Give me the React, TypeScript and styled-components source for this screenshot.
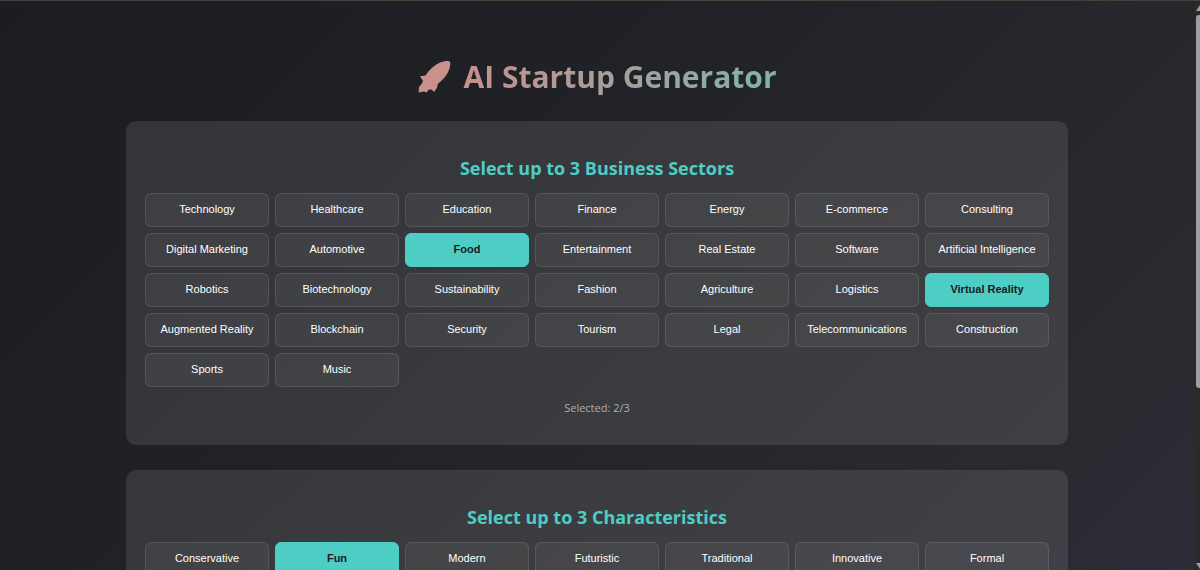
import React, { useState } from "react";
import styled, { createGlobalStyle } from "styled-components";

const GlobalStyle = createGlobalStyle`
  * { box-sizing: border-box; }
  body {
    margin: 0;
    background: #1f2024;
    color: #fff;
    font-family: "Open Sans", "Noto Sans", sans-serif;
  }
`;

const Shell = styled.div`
  display: flex;
  height: 100vh;
  overflow: hidden;
  border-top: 1px solid #47423c;
  background: linear-gradient(135deg, #1c1d20 0%, #202126 35%, #292a2e 80%, #2c2d37 100%);
`;

const Page = styled.main`
  flex: 1;
  min-width: 0;
  overflow-y: auto;
  scrollbar-width: none;
  padding: 48px 127px 24px 126px;
`;

const Title = styled.h1`
  display: flex;
  align-items: center;
  justify-content: center;
  gap: 12px;
  width: fit-content;
  margin: 0 auto 16px;
  font-size: 30px;
  line-height: 56px;
  font-weight: 700;
`;

const TitleText = styled.span`
  background: linear-gradient(90deg, #c88f8b 0%, #a5a09b 50%, #80b3ab 100%);
  background-clip: text;
  -webkit-background-clip: text;
  color: transparent;
`;

const Rocket = styled.svg`
  width: 34px;
  height: 34px;
  fill: #c9908c;
`;

const Panel = styled.section`
  margin-bottom: 25px;
  padding: 31px 19px 28px;
  border-radius: 10px;
  background: rgba(255, 255, 255, 0.1);
`;

const PanelTitle = styled.h2`
  margin: 0 0 9px;
  color: #4ecdc4;
  font-size: 18px;
  line-height: 32px;
  font-weight: 700;
  text-align: center;
`;

const OptionGrid = styled.div`
  display: grid;
  grid-template-columns: repeat(auto-fill, minmax(120px, 1fr));
  gap: 6px;
`;

const OptionButton = styled.button<{ $active: boolean }>`
  height: 34px;
  padding: 0 4px 2px;
  border: 1px solid ${(p) => (p.$active ? "#4ecdc4" : "rgba(255, 255, 255, 0.1)")};
  border-radius: 6px;
  background: ${(p) => (p.$active ? "#4ecdc4" : "rgba(255, 255, 255, 0.05)")};
  color: ${(p) => (p.$active ? "#1a1b1e" : "#fff")};
  font-family: "Liberation Sans", Arial, sans-serif;
  font-size: 11px;
  font-weight: ${(p) => (p.$active ? 700 : 400)};
  white-space: nowrap;
  cursor: pointer;
`;

const Count = styled.p`
  margin: 12px 0 0;
  color: #adadb0;
  font-size: 11px;
  line-height: 18px;
  text-align: center;
`;

const ScrollTrack = styled.div`
  display: flex;
  flex-direction: column;
  align-items: flex-end;
  width: 5px;
  padding: 4px 0 1px;
  background: #2b2b2c;
`;

const ScrollArrow = styled.svg`
  flex: none;
  width: 4px;
  height: 6px;
  fill: #9f9f9f;
`;

const ScrollSpace = styled.div`
  flex: 1;
  width: 4px;
  padding-top: 4px;
`;

const ScrollThumb = styled.div`
  height: 68%;
  border-radius: 3px 0 0 3px;
  background: #9f9f9f;
`;

const sectors = [
  "Technology", "Healthcare", "Education", "Finance", "Energy", "E-commerce", "Consulting",
  "Digital Marketing", "Automotive", "Food", "Entertainment", "Real Estate", "Software",
  "Artificial Intelligence", "Robotics", "Biotechnology", "Sustainability", "Fashion",
  "Agriculture", "Logistics", "Virtual Reality", "Augmented Reality", "Blockchain", "Security",
  "Tourism", "Legal", "Telecommunications", "Construction", "Sports", "Music",
];

const characteristics = [
  "Conservative", "Fun", "Modern", "Futuristic", "Traditional", "Innovative", "Formal",
];

const LIMIT = 3;

interface PickerProps {
  title: string;
  options: string[];
  initial: string[];
}

function Picker({ title, options, initial }: PickerProps) {
  const [selected, setSelected] = useState<string[]>(initial);

  const toggle = (option: string) =>
    setSelected((current) => {
      if (current.includes(option)) return current.filter((item) => item !== option);
      return current.length < LIMIT ? [...current, option] : current;
    });

  return (
    <Panel>
      <PanelTitle>{title}</PanelTitle>
      <OptionGrid>
        {options.map((option) => (
          <OptionButton
            key={option}
            type="button"
            $active={selected.includes(option)}
            aria-pressed={selected.includes(option)}
            onClick={() => toggle(option)}
          >
            {option}
          </OptionButton>
        ))}
      </OptionGrid>
      <Count>
        Selected: {selected.length}/{LIMIT}
      </Count>
    </Panel>
  );
}

export default function App() {
  return (
    <>
      <GlobalStyle />
      <Shell>
        <Page>
          <Title>
            <Rocket viewBox="0 0 34 34" aria-hidden="true">
              <path d="M32.8 1.6C33.6 2.6 33.4 6.4 32 10C30 15 26.4 19.4 20.8 24L20 27.8L17.2 32L14.6 29.6L11.6 29.8L9.6 32.4L7 31.4L1.6 32.4L2 27L4.6 24L6 21L3 16.2L8.6 15.4C12 10 17 5.4 22.6 2.8C26.6 1 31.6 0.4 32.8 1.6Z" />
            </Rocket>
            <TitleText>AI Startup Generator</TitleText>
          </Title>
          <Picker
            title="Select up to 3 Business Sectors"
            options={sectors}
            initial={["Food", "Virtual Reality"]}
          />
          <Picker
            title="Select up to 3 Characteristics"
            options={characteristics}
            initial={["Fun"]}
          />
        </Page>
        <ScrollTrack aria-hidden="true">
          <ScrollArrow viewBox="0 0 4 6">
            <path d="M4 0L0 6H4Z" />
          </ScrollArrow>
          <ScrollSpace>
            <ScrollThumb />
          </ScrollSpace>
          <ScrollArrow viewBox="0 0 4 6">
            <path d="M0 0H4V6Z" />
          </ScrollArrow>
        </ScrollTrack>
      </Shell>
    </>
  );
}
